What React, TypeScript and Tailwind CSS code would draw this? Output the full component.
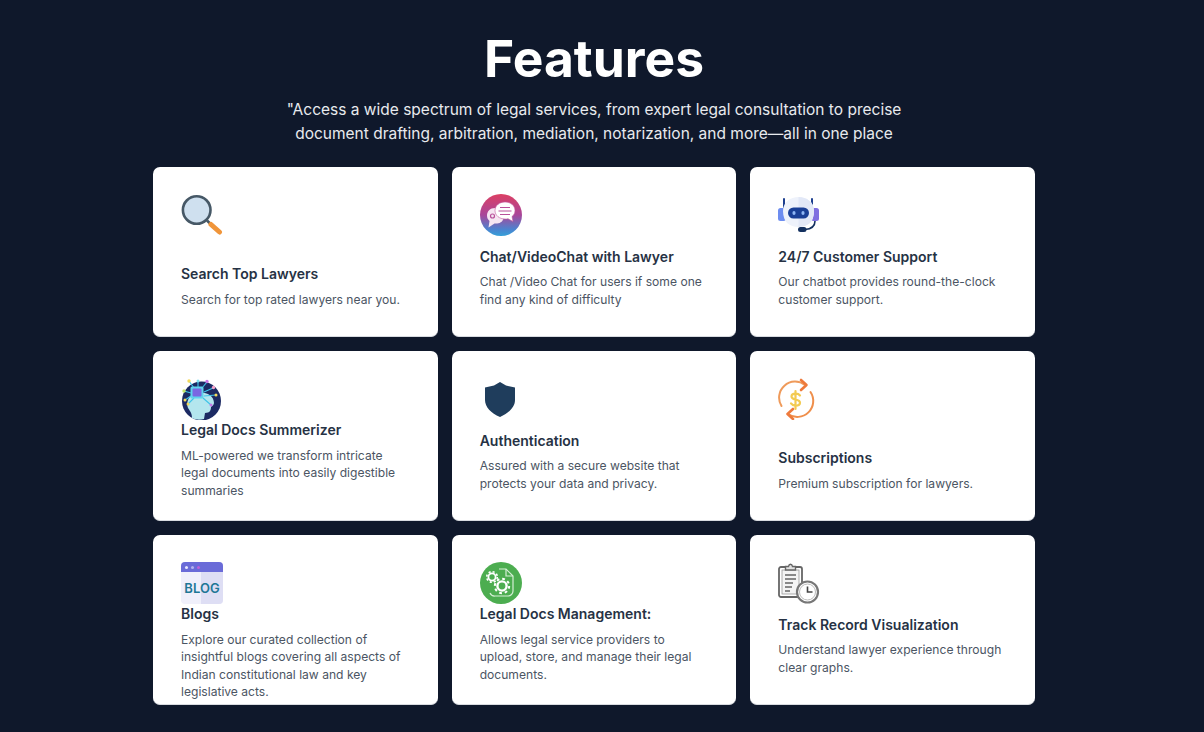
const SearchIcon = () => (
  <svg viewBox="0 0 42 42" className="w-[42px] h-[42px]">
    <circle cx="15.7" cy="16" r="13.8" fill="#cfe0ef" stroke="#465866" strokeWidth="2.6" />
    <path d="M26 26.5l3 3" stroke="#465866" strokeWidth="2.6" />
    <path d="M30 30.500l8.500 7.500" stroke="#f0953a" strokeWidth="5" strokeLinecap="round" />
  </svg>
);

const ChatIcon = () => (
  <svg viewBox="0 0 42 42" className="w-[42px] h-[42px]">
    <defs>
      <linearGradient id="chat-bg" x1="0" y1="0" x2="0" y2="1">
        <stop offset="0" stopColor="#dc3f63" />
        <stop offset="0.5" stopColor="#a8479a" />
        <stop offset="0.85" stopColor="#4a84d0" />
        <stop offset="1" stopColor="#35a0d8" />
      </linearGradient>
    </defs>
    <circle cx="21" cy="21" r="21" fill="url(#chat-bg)" />
    <path d="M15 14c-5 0-8 3.500-8 7.500 0 2.500 1 4 2.500 5.500l-1 6.500 6-4c4 .5 8-1 9-5z" fill="#f6e6f2" />
    <circle cx="12.500" cy="22" r="2" fill="none" stroke="#b9519b" strokeWidth="1.2" />
    <path d="M25 8c-5.500 0-10 3.500-10 8.500S19.500 25 25 25c1 0 2 0 3-.300l5 2.800-1-5c2-1.500 3-3.500 3-6C35 11.500 30.500 8 25 8z" fill="#fff" stroke="#c4559a" strokeWidth="0.6" />
    <path d="M20 13.500h10M18.500 17h13M20 20.500h10" stroke="#b9519b" strokeWidth="1.1" />
  </svg>
);

const BotIcon = () => (
  <svg viewBox="0 0 42 42" className="w-[42px] h-[42px]">
    <path d="M6 5v10M34 5v10" stroke="#1d3f8f" strokeWidth="2" strokeLinecap="round" />
    <rect x="0" y="14" width="8" height="13" rx="2.500" fill="#6d8df0" />
    <rect x="33" y="14" width="8" height="13" rx="2.500" fill="#7f6fe0" />
    <path d="M20.500 3c8 0 15.500 5 15.500 14 0 11-6.500 16-15.500 16S5 28 5 17C5 8 12.500 3 20.500 3z" fill="#eef2fb" />
    <path d="M20.500 3c8 0 15.500 5 15.500 14 0 11-6.500 16-15.500 16z" fill="#e2e8f7" />
    <rect x="10" y="13.500" width="21" height="11" rx="5.500" fill="#1a3f96" />
    <ellipse cx="16" cy="19" rx="1.600" ry="2" fill="#8fb6f5" />
    <ellipse cx="25" cy="19" rx="1.600" ry="2" fill="#8fb6f5" />
    <path d="M37 27c0 5-4 8-10 8.500" fill="none" stroke="#13305f" strokeWidth="1.600" />
    <rect x="20" y="33" width="8.500" height="5" rx="2.500" fill="#13305f" />
  </svg>
);

const BrainIcon = () => (
  <svg viewBox="0 0 42 42" className="w-[42px] h-[42px]">
    <circle cx="20.500" cy="23" r="19.500" fill="#1c2a63" />
    <path d="M11 40c0-5-2-7-4-10-2-5 0-13 8-15 9-2 18 2 18 10 0 2-2 3-3 4 0 3-1 6-6 6l-1 6c-4 1-8 1-12-1z" fill="#b4e6ee" />
    <g stroke="#3fc4e8" strokeWidth="1.100" fill="none">
      <path d="M13 10L8 3M17 10V4M21 10l5-6M23 14l9-4M23 18l12-1M22 20l8 7M13 20l-6 6M10 15l-7-2M10 18l-6 4" />
    </g>
    <circle cx="8" cy="3" r="1.700" fill="#f4d95a" />
    <circle cx="17" cy="3" r="1.500" fill="#7fe0f0" />
    <circle cx="26" cy="3.500" r="1.700" fill="#c877e8" />
    <circle cx="32.500" cy="9.500" r="1.700" fill="#f4a0c8" />
    <circle cx="3" cy="13" r="1.700" fill="#c7e86a" />
    <circle cx="4" cy="22" r="1.500" fill="#f4d95a" />
    <circle cx="7" cy="26" r="1.500" fill="#f4d95a" />
    <circle cx="35" cy="17" r="1.500" fill="#f4d95a" />
    <circle cx="30" cy="27" r="1.500" fill="#c877e8" />
    <rect x="9.500" y="8.500" width="13" height="12" rx="1.500" fill="#5fd3ec" />
    <rect x="11.500" y="10.500" width="9" height="8" rx="1" fill="#7a67e2" />
  </svg>
);

const ShieldIcon = () => (
  <svg viewBox="0 0 42 42" className="w-[42px] h-[42px]">
    <path d="M20 4l6 3.500 9 2V22c0 7-6 13-15 17C11 35 5 29 5 22V9.500l9-2z" fill="#1f3d5c" />
  </svg>
);

const SubscriptionIcon = () => (
  <svg viewBox="0 0 42 42" className="w-[42px] h-[42px]" fill="none">
    <path d="M3.500 28A16 16 0 0 1 27 7" stroke="#ef9a5a" strokeWidth="2" strokeLinecap="round" />
    <path d="M23 2l5.500 5-5.500 5" stroke="#ee7a3c" strokeWidth="2.600" strokeLinecap="round" strokeLinejoin="round" />
    <path d="M32.500 14A16 16 0 0 1 10 36" stroke="#ef8f4c" strokeWidth="2" strokeLinecap="round" />
    <path d="M15 31l-5.500 5 5.500 5" stroke="#ee7a3c" strokeWidth="2.600" strokeLinecap="round" strokeLinejoin="round" />
    <path d="M22 17.500c-1-1.300-2.500-1.800-4.500-1.800-2.500 0-4 1.300-4 2.900 0 1.900 1.800 2.500 4 3 2.200.400 4.500 1.200 4.500 3.100 0 1.800-1.800 2.900-4.500 2.900-2 0-3.500-.800-4.500-2.200M17.500 13v18" stroke="#f3cb52" strokeWidth="2.200" strokeLinecap="round" />
  </svg>
);

const BlogIcon = () => (
  <div className="relative w-[42px] h-[42px] rounded-[4px] overflow-hidden bg-[#f0f0fb]">
    <div className="absolute right-0 top-0 bottom-0 w-[22px] bg-[#dedef4]" />
    <div className="relative h-[10px] bg-[#6a6bd8] flex items-center gap-[3px] pl-[4px]">
      <span className="w-[3px] h-[3px] rounded-full bg-[#e8e8ff]" />
      <span className="w-[3px] h-[3px] rounded-full bg-[#b3b3ee]" />
      <span className="w-[3px] h-[3px] rounded-full bg-[#c060d8]" />
    </div>
    <div className="relative text-center text-[13px] leading-[32px] font-semibold text-[#1f7896]">BLOG</div>
  </div>
);

const GearsIcon = () => (
  <svg viewBox="0 0 42 42" className="w-[42px] h-[42px]" fill="none">
    <circle cx="21" cy="21" r="21" fill="#4cad50" />
    <path d="M19 7h7l7 7v15a5 5 0 0 1-5 5H15a5 5 0 0 1-5-3" stroke="#d5efd6" strokeWidth="1.200" />
    <path d="M26 7v7h7" stroke="#d5efd6" strokeWidth="1.200" />
    <circle cx="12" cy="15" r="3.600" stroke="#fff" strokeWidth="1.800" />
    <circle cx="12" cy="15" r="5.300" stroke="#fff" strokeWidth="1.600" strokeDasharray="2.100 2.060" />
    <circle cx="22" cy="24" r="4.600" stroke="#fff" strokeWidth="2.400" />
    <circle cx="22" cy="24" r="7.200" stroke="#fff" strokeWidth="2" strokeDasharray="2.800 2.850" />
  </svg>
);

const ClipboardIcon = () => (
  <svg viewBox="0 0 42 42" className="w-[42px] h-[42px]" fill="none">
    <rect x="1" y="5" width="23" height="30" rx="2" fill="#fff" stroke="#666" strokeWidth="1.800" />
    <rect x="4" y="8" width="17" height="24" fill="#f4f4f4" stroke="#999" strokeWidth="0.800" />
    <path d="M7.500 8V4.500h3C11 1.500 14 1.500 14.500 4.500h3V8z" fill="#e2e2e2" stroke="#666" strokeWidth="1.400" />
    <path d="M7 13h11M7 17h11M7 21h8M7 25h7M7 29h5" stroke="#666" strokeWidth="1.300" />
    <circle cx="29.500" cy="30" r="10.500" fill="#fff" stroke="#777" strokeWidth="2.200" />
    <circle cx="29.500" cy="30" r="8" stroke="#bbb" strokeWidth="1" />
    <path d="M29.500 24.500V30h5" stroke="#444" strokeWidth="1.600" />
  </svg>
);

const features = [
  { title: "Search Top Lawyers", text: "Search for top rated lawyers near you.", icon: <SearchIcon /> },
  { title: "Chat/VideoChat with Lawyer", text: "Chat /Video Chat for users if some one find any kind of difficulty", icon: <ChatIcon /> },
  { title: "24/7 Customer Support", text: "Our chatbot provides round-the-clock customer support.", icon: <BotIcon /> },
  { title: "Legal Docs Summerizer", text: "ML-powered we transform intricate legal documents into easily digestible summaries", icon: <BrainIcon /> },
  { title: "Authentication", text: "Assured with a secure website that protects your data and privacy.", icon: <ShieldIcon /> },
  { title: "Subscriptions", text: "Premium subscription for lawyers.", icon: <SubscriptionIcon /> },
  { title: "Blogs", text: "Explore our curated collection of insightful blogs covering all aspects of Indian constitutional law and key legislative acts.", icon: <BlogIcon /> },
  { title: "Legal Docs Management:", text: "Allows legal service providers to upload, store, and manage their legal documents.", icon: <GearsIcon /> },
  { title: "Track Record Visualization", text: "Understand lawyer experience through clear graphs.", icon: <ClipboardIcon /> },
];

export default function App() {
  return (
    <div className="h-[732px] overflow-hidden bg-[#0f182b] font-['Inter',sans-serif] pt-[27px] pr-[16px]">
      <h1 className="text-center text-[51.5px] leading-[62px] font-bold text-white">Features</h1>
      <p className="mt-[9px] mx-auto w-[640px] text-center text-[15.5px] leading-[24px] text-[#e8eaee]">
        "Access a wide spectrum of legal services, from expert legal consultation to precise document drafting, arbitration, mediation, notarization, and more—all in one place
      </p>
      <div className="mt-[21px] mx-auto w-[882px] grid grid-cols-3 gap-x-[14px] gap-y-[14px]">
        {features.map((f) => (
          <div key={f.title} className="h-[170px] bg-white rounded-[7px] border-b border-[#d8dbe0] pt-[27px] px-[28px] pb-[28px] flex flex-col">
            <div className="flex-1 min-h-[43px]">{f.icon}</div>
            <h3 className="text-[14px] leading-[17.5px] font-semibold text-[#263244]">{f.title}</h3>
            <p className="mt-[8px] text-[12.1px] leading-[17.5px] text-[#4b5563]">{f.text}</p>
          </div>
        ))}
      </div>
    </div>
  );
}
